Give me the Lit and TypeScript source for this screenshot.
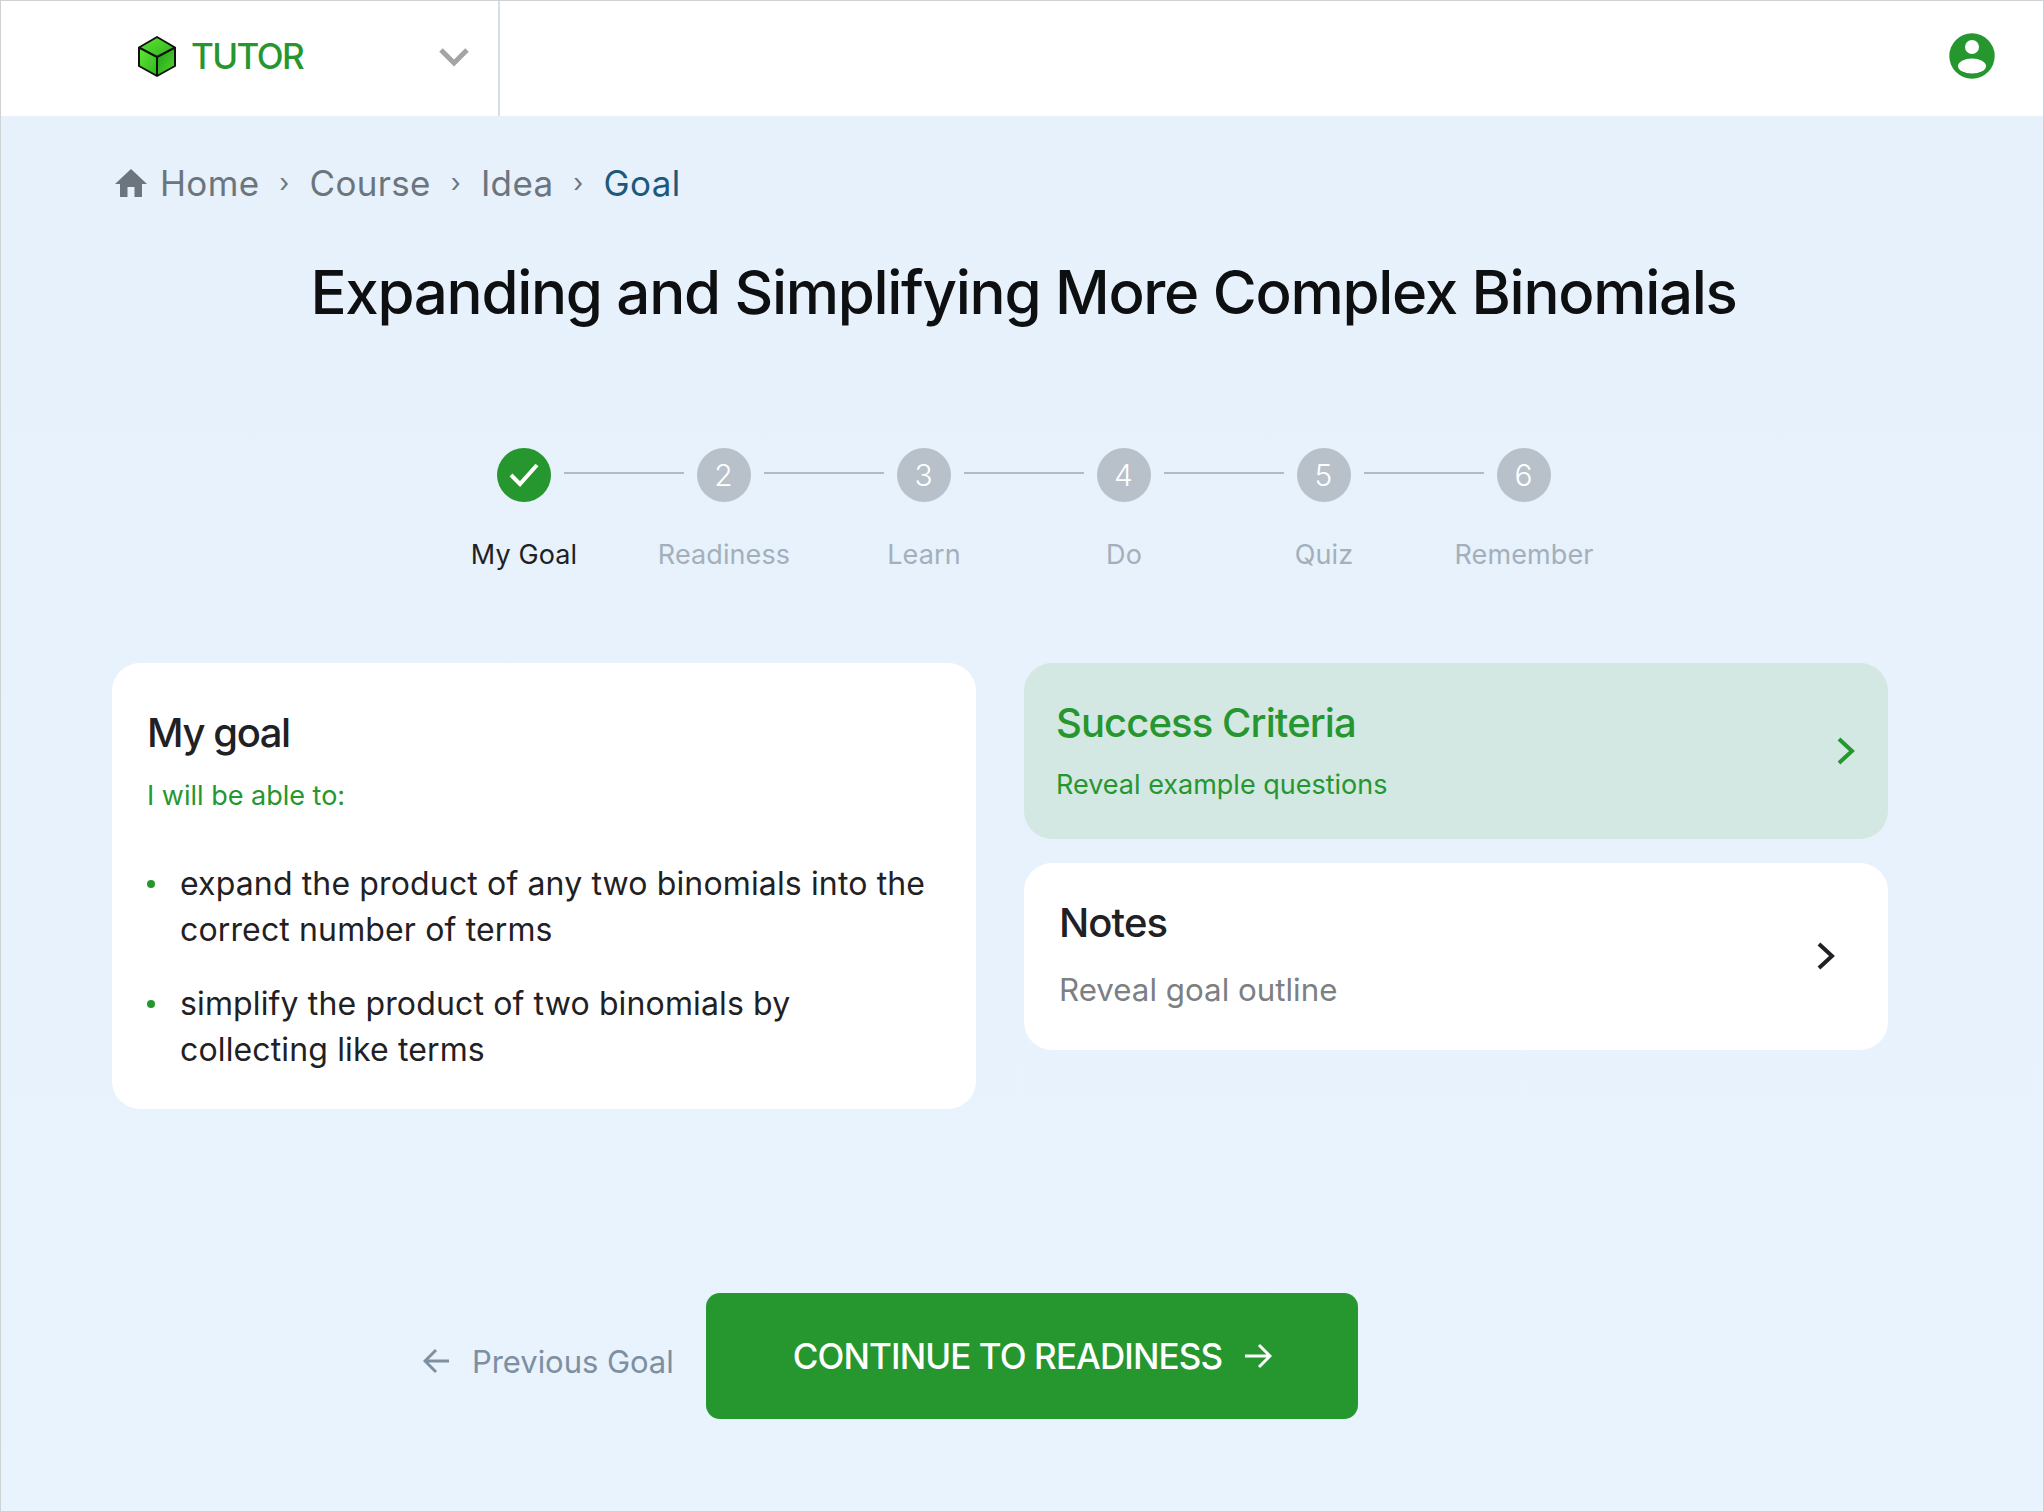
import { LitElement, css, html, svg } from 'lit'
import { customElement } from 'lit/decorators.js'

const chevron = () => html`
  <svg width="20" height="28" viewBox="0 0 20 28" fill="none">
    <path d="M3 2 L16 14 L3 26" stroke="currentColor" stroke-width="4"/>
  </svg>`

const cube = svg`
  <defs>
    <linearGradient id="cubeTop" x1="0" y1="0" x2="1" y2="1"><stop offset="0" stop-color="#5fe834"/><stop offset="1" stop-color="#2eb01f"/></linearGradient>
    <linearGradient id="cubeLeft" x1="0" y1="0" x2="1" y2="1"><stop offset="0" stop-color="#62ea34"/><stop offset="1" stop-color="#2fb420"/></linearGradient>
    <linearGradient id="cubeRight" x1="0" y1="0" x2="1" y2="1"><stop offset="0" stop-color="#1f9a1a"/><stop offset="1" stop-color="#52dc2c"/></linearGradient>
  </defs>
  <path d="M19 1 L37 11.5 L19 21 L1 11.5 Z" fill="url(#cubeTop)"/>
  <path d="M1 11.5 L19 21 L19 40 L1 30 Z" fill="url(#cubeLeft)"/>
  <path d="M37 11.5 L19 21 L19 40 L37 30 Z" fill="url(#cubeRight)"/>
  <path d="M19 1 L37 11.5 L37 30 L19 40 L1 30 L1 11.5 Z M1 11.5 L19 21 L37 11.5 M19 21 L19 40" fill="none" stroke="#111" stroke-width="2" stroke-linejoin="round"/>`

@customElement('app-root')
export class AppRoot extends LitElement {
  static styles = css`
    :host {
      display: block;
      box-sizing: border-box;
      width: 2044px;
      height: 1512px;
      overflow: hidden;
      background: linear-gradient(#e6f1fb, #e8f3fd);
      border: 1px solid #cfd2d4;
      font-family: Inter, "Liberation Sans", sans-serif;
      color: #1f2124;
    }
    .header {
      display: flex;
      align-items: center;
      justify-content: space-between;
      height: 115px;
      background: #fff;
    }
    .brand {
      display: flex;
      align-items: center;
      box-sizing: border-box;
      width: 499px;
      height: 100%;
      padding: 0 29px 4px 137px;
      border-right: 2px solid #d5dfe6;
    }
    .brand-name {
      margin-left: 15px;
      margin-right: auto;
      margin-bottom: 2px;
      font-size: 35px;
      font-weight: 500;
      letter-spacing: -1.6px;
      color: #26962f;
    }
    .user { margin: 0 48px 5px 0; }
    .main { padding: 0 108px 0 111px; }
    .crumbs {
      display: flex;
      align-items: center;
      height: 44px;
      margin-top: 45px;
      font-size: 35px;
      line-height: 44px;
      letter-spacing: 0.35px;
      color: #6c757d;
    }
    .crumbs svg { margin: 0 13px 0 3px; }
    .sep { width: 50px; text-align: center; font-size: 26px; }
    .current { color: #1c5a7d; }
    h1 {
      margin: 49px 0 0;
      font-size: 60px;
      line-height: 76px;
      font-weight: 500;
      letter-spacing: -1.3px;
      text-align: center;
      color: #0e0f11;
    }
    .track {
      display: flex;
      align-items: center;
      justify-content: center;
      margin-top: 118px;
    }
    .circle {
      display: flex;
      align-items: center;
      justify-content: center;
      width: 54px;
      height: 54px;
      border-radius: 50%;
      background: #b8c0ca;
      color: #fff;
      font-size: 30px;
      font-weight: 300;
    }
    .circle.done { background: #26962f; }
    .line {
      width: 120px;
      height: 2px;
      margin: -5px 13px 0;
      background: #b3bac0;
    }
    .labels {
      display: flex;
      justify-content: center;
      margin-top: 35px;
      padding-left: 1px;
      font-size: 27px;
      line-height: 36px;
      letter-spacing: 0.1px;
      color: #a3afbb;
    }
    .labels span { width: 200px; text-align: center; }
    .labels .active { color: #1f2124; }
    .cards {
      display: grid;
      grid-template-columns: 864px 864px;
      column-gap: 48px;
      align-items: start;
      margin-top: 90px;
    }
    .card { border-radius: 28px; background: #fff; }
    .goal { height: 446px; box-sizing: border-box; padding: 45px 36px 0 35px; }
    h2, h3 {
      margin: 0;
      font-size: 40px;
      line-height: 50px;
      font-weight: 500;
      letter-spacing: -0.9px;
    }
    h2 { letter-spacing: -1.4px; }
    .able {
      margin: 20px 0 0;
      font-size: 27px;
      line-height: 36px;
      color: #26962f;
    }
    ul { margin: 47px 0 0; padding: 0; list-style: none; }
    li {
      position: relative;
      padding: 0 10px 0 33px;
      font-size: 32px;
      line-height: 46px;
      letter-spacing: 0.14px;
      color: #1f2124;
    }
    li + li { margin-top: 28px; }
    li::before {
      content: "";
      position: absolute;
      left: 0;
      top: 19px;
      width: 8px;
      height: 8px;
      border-radius: 50%;
      background: #26962f;
    }
    .side { display: flex; flex-direction: column; gap: 24px; }
    .row {
      display: flex;
      align-items: center;
      justify-content: space-between;
      box-sizing: border-box;
    }
    .row > div { align-self: flex-start; }
    .success {
      height: 176px;
      padding: 35px 32px 0 32px;
      background: #d3e7e3;
      color: #26962f;
    }
    .success h3 { color: #26962f; }
    .success p { margin: 19px 0 0; font-size: 27px; line-height: 36px; }
    .success svg { margin-top: -36px; }
    .notes { height: 187px; padding: 35px 52px 0 35px; }
    .notes p { margin: 22px 0 0; font-size: 31.300px; line-height: 40px; color: #7c7f83; }
    .notes svg { margin-top: -36px; }
    .actions {
      display: flex;
      align-items: center;
      margin-top: 184px;
      padding-left: 311px;
    }
    .prev {
      display: flex;
      align-items: center;
      width: 283px;
      margin-top: 10px;
      font-size: 31px;
      letter-spacing: -0.05px;
      color: #7d8fa0;
    }
    .prev svg { margin-right: 22px; }
    .next {
      display: flex;
      align-items: center;
      justify-content: center;
      gap: 22px;
      width: 652px;
      height: 126px;
      padding: 0 0 0 1px;
      box-sizing: border-box;
      border-radius: 14px;
      background: #26962f;
      color: #fff;
      font-size: 35px;
      font-weight: 500;
      letter-spacing: -0.9px;
    }
  `

  private steps = ['My Goal', 'Readiness', 'Learn', 'Do', 'Quiz', 'Remember']
  private crumbs = ['Home', 'Course', 'Idea']

  render() {
    return html`
      <div class="header">
        <div class="brand">
          <svg width="38" height="41" viewBox="0 0 38 41">${cube}</svg>
          <span class="brand-name">TUTOR</span>
          <svg width="30" height="20" viewBox="0 0 30 20" fill="none">
            <path d="M2 3 L15 16 L28 3" stroke="#a4a4a4" stroke-width="5"/>
          </svg>
        </div>
        <svg class="user" width="46" height="46" viewBox="0 0 46 46">
          <circle cx="23" cy="23" r="22.7" fill="#26962f"/>
          <circle cx="23" cy="14" r="7" fill="#fff"/>
          <ellipse cx="23" cy="33" rx="14" ry="7.5" fill="#fff"/>
        </svg>
      </div>

      <div class="main">
        <div class="crumbs">
          <svg width="32" height="28" viewBox="0 0 32 28">
            <path d="M16 0 L32 15 L27 15 L27 28 L19.500 28 L19.500 18 L12.500 18 L12.500 28 L5 28 L5 15 L0 15 Z" fill="#6c757d"/>
          </svg>
          ${this.crumbs.map((c) => html`<span>${c}</span><span class="sep">›</span>`)}
          <span class="current">Goal</span>
        </div>

        <h1>Expanding and Simplifying More Complex Binomials</h1>

        <div class="track">
          ${this.steps.map((_, i) => html`
            ${i > 0 ? html`<div class="line"></div>` : ''}
            ${i === 0
              ? html`<div class="circle done">
                  <svg width="32" height="26" viewBox="0 0 32 26" fill="none">
                    <path d="M3 13 L12 22 L29 3" stroke="#fff" stroke-width="4"/>
                  </svg>
                </div>`
              : html`<div class="circle">${i + 1}</div>`}
          `)}
        </div>
        <div class="labels">
          ${this.steps.map((s, i) => html`<span class=${i === 0 ? 'active' : ''}>${s}</span>`)}
        </div>

        <div class="cards">
          <div class="card goal">
            <h2>My goal</h2>
            <p class="able">I will be able to:</p>
            <ul>
              <li>expand the product of any two binomials into the correct number of terms</li>
              <li>simplify the product of two binomials by collecting like terms</li>
            </ul>
          </div>
          <div class="side">
            <div class="card row success">
              <div>
                <h3>Success Criteria</h3>
                <p>Reveal example questions</p>
              </div>
              ${chevron()}
            </div>
            <div class="card row notes">
              <div>
                <h3>Notes</h3>
                <p>Reveal goal outline</p>
              </div>
              ${chevron()}
            </div>
          </div>
        </div>

        <div class="actions">
          <div class="prev">
            <svg width="27" height="26" viewBox="0 0 27 26" fill="none">
              <path d="M26 13 L3 13 M13 2 L2 13 L13 24" stroke="#7d8fa0" stroke-width="3"/>
            </svg>
            Previous Goal
          </div>
          <div class="next">
            CONTINUE TO READINESS
            <svg width="28" height="26" viewBox="0 0 28 26" fill="none">
              <path d="M1 13 L25 13 M15 2 L26 13 L15 24" stroke="#fff" stroke-width="3"/>
            </svg>
          </div>
        </div>
      </div>
    `
  }
}
